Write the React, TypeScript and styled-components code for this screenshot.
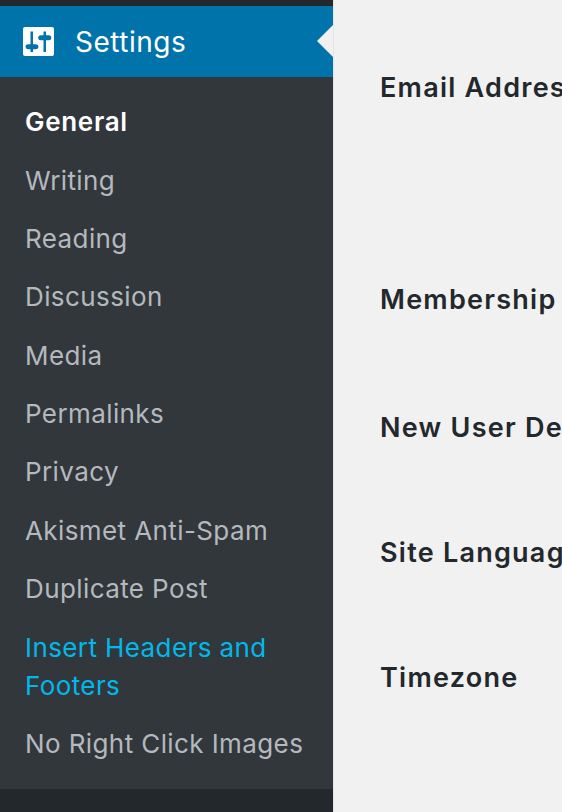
import React from 'react';
import styled, { createGlobalStyle } from 'styled-components';

const subItems = [
    { label: 'General', kind: 'current' },
    { label: 'Writing' },
    { label: 'Reading' },
    { label: 'Discussion' },
    { label: 'Media' },
    { label: 'Permalinks' },
    { label: 'Privacy' },
    { label: 'Akismet Anti-Spam' },
    { label: 'Duplicate Post' },
    { label: 'Insert Headers and Footers', kind: 'hover' },
    { label: 'No Right Click Images' },
];

const fields = [
    { label: 'Email Address', height: 212 },
    { label: 'Membership', height: 128 },
    { label: 'New User Default Role', height: 125 },
    { label: 'Site Language', height: 125 },
    { label: 'Timezone', height: 100 },
];

function SettingsIcon() {
    return (
        <svg width="31" height="29" viewBox="0 0 31 29">
            <rect width="31" height="29" rx="2" fill="#fff" />
            <path
                d="M7.5 4.5H10v12.7h3a2.5 2.5 0 0 1 0 5h-3v2.8H7.5v-2.8H5a2.5 2.5 0 0 1 0-5h2.5zM20.5 4.5H23v3.7h2.8a2.5 2.5 0 0 1 0 5H23V25h-2.5V13.2h-2.8a2.5 2.5 0 0 1 0-5h2.8z"
                fill="#0073aa"
            />
        </svg>
    );
}

export default function App() {
    return (
        <Page>
            <GlobalStyle />
            <Sidebar>
                <TopStrip />
                <ActiveMenu>
                    <SettingsIcon />
                    <ActiveLabel>Settings</ActiveLabel>
                    <Notch />
                </ActiveMenu>
                <SubMenu>
                    {subItems.map((item) => (
                        <SubItem key={item.label} $kind={item.kind}>
                            {item.label}
                        </SubItem>
                    ))}
                </SubMenu>
                <BottomStrip />
            </Sidebar>
            <Content>
                {fields.map((field) => (
                    <FieldRow key={field.label} $height={field.height}>
                        {field.label}
                    </FieldRow>
                ))}
            </Content>
        </Page>
    );
}

const GlobalStyle = createGlobalStyle`
    html, body {
        margin: 0;
        padding: 0;
        background: #f1f1f1;
    }
`;

const Page = styled.div`
    display: flex;
    width: 562px;
    height: 812px;
    overflow: hidden;
    font-family: Inter, 'Liberation Sans', sans-serif;
`;

const Sidebar = styled.nav`
    display: flex;
    flex: none;
    flex-direction: column;
    box-sizing: content-box;
    width: 333px;
    background: #32373c;
    border-right: 1px solid #e4e4e4;
`;

const TopStrip = styled.div`
    flex: none;
    height: 6px;
    background: #23282d;
`;

const ActiveMenu = styled.div`
    position: relative;
    display: flex;
    flex: none;
    align-items: center;
    gap: 21px;
    height: 71px;
    padding-left: 23px;
    background: #0073aa;
`;

const ActiveLabel = styled.span`
    padding-top: 1px;
    color: #fff;
    font-size: 28px;
    letter-spacing: 0.5px;
    line-height: 38px;
`;

const Notch = styled.span`
    position: absolute;
    top: 50%;
    right: 0;
    margin-top: -16.5px;
    border: 16.5px solid transparent;
    border-right-color: #f1f1f1;
    border-left-width: 0;
`;

const SubMenu = styled.ul`
    flex: none;
    margin: 0;
    padding: 16px 0 15.5px;
    list-style: none;
`;

const kindColors: Record<string, string> = {
    current: '#fff',
    hover: '#00b9eb',
};

const SubItem = styled.li<{ $kind?: string }>`
    padding: 10.2px 20px 10.2px 25px;
    color: ${(props) => (props.$kind ? kindColors[props.$kind] : '#b4b9be')};
    font-size: 26px;
    font-weight: ${(props) => (props.$kind === 'current' ? 600 : 400)};
    letter-spacing: ${(props) => (props.$kind === 'current' ? 0.7 : 0.4)}px;
    line-height: 38px;
`;

const BottomStrip = styled.div`
    flex: 1;
    background: #23282d;
`;

const Content = styled.main`
    flex: 1;
    min-width: 0;
    padding: 69px 0 0 46px;
`;

const FieldRow = styled.div<{ $height: number }>`
    height: ${(props) => props.$height}px;
    color: #23282d;
    font-size: 27px;
    font-weight: 600;
    letter-spacing: 1.25px;
    line-height: 38px;
    white-space: nowrap;
`;
